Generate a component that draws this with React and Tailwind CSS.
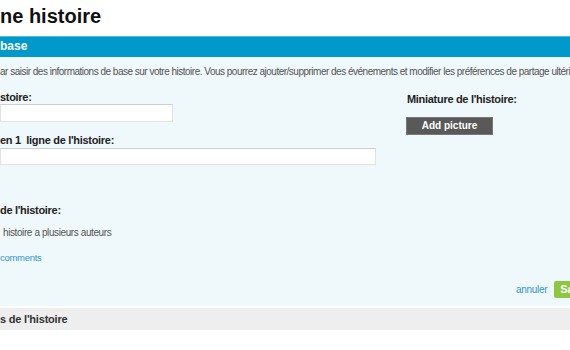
export default function App() {
  return (
    <div className="w-[570px] h-[350px] overflow-hidden bg-white font-['Liberation_Sans',Arial,sans-serif] text-[#222]">
      {/* Page title */}
      <h1 className="h-[36px] pt-[4px] text-[20px] leading-[24px] font-bold text-[#111] whitespace-nowrap">
        ne histoire
      </h1>

      {/* Section header */}
      <div className="h-[21px] bg-[#0099cc] border-t border-[#55b8dd] text-white text-[12px] leading-[19px] font-bold">
        base
      </div>

      {/* Section body */}
      <div className="h-[249px] bg-[#eff8fb] pt-[8px] pb-[8px] flex flex-col">
        <p className="h-[14px] text-[10px] tracking-[-0.5px] leading-[14px] text-[#555] whitespace-nowrap">
          ar saisir des informations de base sur votre histoire. Vous pourrez ajouter/supprimer des événements et modifier les préférences de partage ultérieurement.
        </p>

        <div className="mt-[11px] flex">
          <div className="w-[406px] flex flex-col">
            <label className="h-[14px] text-[11px] tracking-[-0.3px] leading-[14px] font-bold whitespace-nowrap">stoire:</label>
            <div className="w-[173px] h-[18px] bg-white border border-[#e2e2e2] border-t-[#cfcfcf]" />

            <label className="mt-[11px] h-[14px] text-[11px] tracking-[-0.3px] leading-[14px] font-bold whitespace-pre">en 1  ligne de l'histoire:</label>
            <div className="mt-[1px] w-[376px] h-[17px] bg-white border border-[#e2e2e2] border-t-[#cfcfcf]" />

            <label className="mt-[38px] h-[14px] text-[11px] tracking-[-0.3px] leading-[14px] font-bold whitespace-nowrap">de l'histoire:</label>
            <div className="mt-[9px] pl-[3px] h-[14px] text-[10px] tracking-[-0.4px] leading-[14px] text-[#555] whitespace-nowrap">
              histoire a plusieurs auteurs
            </div>
            <a className="mt-[11px] h-[14px] text-[9.5px] tracking-[-0.3px] leading-[14px] text-[#3399cc] whitespace-nowrap">comments</a>
          </div>

          <div className="flex flex-col pt-[2px]">
            <label className="pl-[1px] h-[14px] text-[11px] tracking-[-0.3px] leading-[14px] font-bold whitespace-nowrap">Miniature de l'histoire:</label>
            <button className="mt-[11px] w-[87px] h-[18px] bg-[#595959] border border-[#777] text-white text-[10px] font-bold leading-[16px]">
              Add picture
            </button>
          </div>
        </div>

        <div className="mt-auto flex items-center gap-[7px] pl-[516px] whitespace-nowrap">
          <a className="text-[10px] tracking-[-0.3px] leading-[14px] text-[#3399cc]">annuler</a>
          <button className="shrink-0 w-[80px] h-[17px] pl-[6px] text-left bg-[#8dc63f] rounded-[2px] text-white text-[11px] font-bold leading-[17px]">
            Sauvegarder
          </button>
        </div>
      </div>

      <div className="h-[2px] bg-white" />

      {/* Collapsed section */}
      <div className="h-[22px] bg-[#eeeeee] text-[11px] tracking-[-0.2px] leading-[22px] font-bold text-[#333] whitespace-nowrap">
        s de l'histoire
      </div>
    </div>
  )
}
